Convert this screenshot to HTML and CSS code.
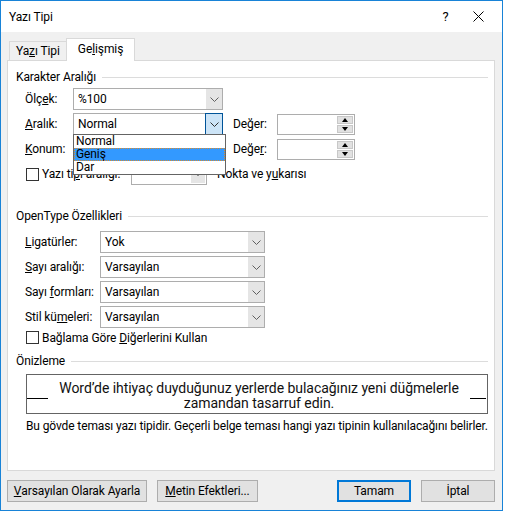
FILE: index.html
```html
<!DOCTYPE html>
<html lang="tr">
<head>
<meta charset="utf-8">
<title>Yazı Tipi</title>
<link rel="stylesheet" href="styles.css">
</head>
<body>
<div class="window">
  <div class="titlebar">
    <span class="title">Yazı Tipi</span>
    <div class="tb-btns">
      <span class="tb-btn tb-help">?</span>
      <span class="tb-btn tb-close"><svg width="11" height="11" viewBox="0 0 11 11"><path d="M0.5 0.5 L10.5 10.5 M10.5 0.5 L0.5 10.5" stroke="#000" stroke-width="1" fill="none"/></svg></span>
    </div>
  </div>
  <div class="body">
    <div class="tabs">
      <div class="tab">Ya<u>z</u>ı Tipi</div>
      <div class="tab active">Ge<u>l</u>işmiş</div>
    </div>
    <div class="panel">
      <div class="group-head"><span>Karakter Aralığı</span><i class="rule"></i></div>
      <div class="rows rows-char">
        <div class="row">
          <span class="lbl lbl-char">Ölç<u>e</u>k:</span>
          <div class="combo combo-char"><span class="val">%100</span><span class="drop"><svg width="9" height="5" viewBox="0 0 9 5"><path d="M0.5 0.5 L4.5 4.5 L8.5 0.5" stroke="#606060" fill="none"/></svg></span></div>
        </div>
        <div class="row">
          <span class="lbl lbl-char"><u>A</u>ralık:</span>
          <div class="combo combo-char focus"><span class="val">Normal</span><span class="drop"><svg width="9" height="5" viewBox="0 0 9 5"><path d="M0.5 0.5 L4.5 4.5 L8.5 0.5" stroke="#303030" fill="none"/></svg></span>
            <div class="listbox">
              <div class="opt">Normal</div>
              <div class="opt sel">Geniş</div>
              <div class="opt">Dar</div>
            </div>
          </div>
          <span class="lbl lbl-val">De<u>ğ</u>er:</span>
          <div class="spin"><span class="spin-field"></span><span class="spin-btns"><span class="sb"><i class="tri-up"></i></span><span class="sb"><i class="tri-dn"></i></span></span></div>
        </div>
        <div class="row">
          <span class="lbl lbl-char"><u>K</u>onum:</span>
          <div class="combo combo-char"><span class="val">Normal</span><span class="drop"><svg width="9" height="5" viewBox="0 0 9 5"><path d="M0.5 0.5 L4.5 4.5 L8.5 0.5" stroke="#606060" fill="none"/></svg></span></div>
          <span class="lbl lbl-val">Değe<u>r</u>:</span>
          <div class="spin"><span class="spin-field"></span><span class="spin-btns"><span class="sb"><i class="tri-up"></i></span><span class="sb"><i class="tri-dn"></i></span></span></div>
        </div>
        <div class="row">
          <span class="chk-wrap"><i class="chk"></i><span>Yazı ti<u>p</u>i aralığı:</span></span>
          <div class="combo combo-size"><span class="val"></span><span class="drop drop-small"><i class="tri-dn"></i></span></div>
          <span class="after">Nokta ve y<u>u</u>karısı</span>
        </div>
      </div>

      <div class="group-head gh-ot"><span>OpenType Özellikleri</span><i class="rule"></i></div>
      <div class="rows rows-ot">
        <div class="row">
          <span class="lbl lbl-ot"><u>L</u>igatürler:</span>
          <div class="combo combo-ot"><span class="val">Yok</span><span class="drop"><svg width="9" height="5" viewBox="0 0 9 5"><path d="M0.5 0.5 L4.5 4.5 L8.5 0.5" stroke="#606060" fill="none"/></svg></span></div>
        </div>
        <div class="row">
          <span class="lbl lbl-ot"><u>S</u>ayı aralığı:</span>
          <div class="combo combo-ot"><span class="val">Varsayılan</span><span class="drop"><svg width="9" height="5" viewBox="0 0 9 5"><path d="M0.5 0.5 L4.5 4.5 L8.5 0.5" stroke="#606060" fill="none"/></svg></span></div>
        </div>
        <div class="row">
          <span class="lbl lbl-ot">Sayı <u>f</u>ormları:</span>
          <div class="combo combo-ot"><span class="val">Varsayılan</span><span class="drop"><svg width="9" height="5" viewBox="0 0 9 5"><path d="M0.5 0.5 L4.5 4.5 L8.5 0.5" stroke="#606060" fill="none"/></svg></span></div>
        </div>
        <div class="row">
          <span class="lbl lbl-ot">Stil kü<u>m</u>eleri:</span>
          <div class="combo combo-ot"><span class="val">Varsayılan</span><span class="drop"><svg width="9" height="5" viewBox="0 0 9 5"><path d="M0.5 0.5 L4.5 4.5 L8.5 0.5" stroke="#606060" fill="none"/></svg></span></div>
        </div>
        <div class="row row-chk">
          <span class="chk-wrap"><i class="chk"></i><span>Bağlama Göre <u>D</u>iğerlerini Kullan</span></span>
        </div>
      </div>

      <div class="group-head gh-prev"><span>Önizleme</span><i class="rule"></i></div>
      <div class="preview">
        <i class="base base-l"></i>
        <div class="preview-text">Word’de ihtiyaç duyduğunuz yerlerde bulacağınız yeni düğmelerle zamandan tasarruf edin.</div>
        <i class="base base-r"></i>
      </div>
      <div class="caption">Bu gövde teması yazı tipidir. Geçerli belge teması hangi yazı tipinin kullanılacağını belirler.</div>
    </div>
    <div class="buttons">
      <span class="btn btn-default"><u>V</u>arsayılan Olarak Ayarla</span>
      <span class="btn btn-effects"><u>M</u>etin Efektleri...</span>
      <span class="spacer"></span>
      <span class="btn btn-ok">Tamam</span>
      <span class="btn btn-cancel">İptal</span>
    </div>
  </div>
</div>
</body>
</html>
```

FILE: styles.css
```css
html, body {
  margin: 0;
  padding: 0;
  background: #ffffff;
}
body {
  font-family: Roboto, "Noto Sans", "DejaVu Sans", sans-serif;
  font-size: 12px;
  letter-spacing: -0.1px;
  color: #000;
  line-height: 16px;
}
u { text-decoration: underline; text-underline-offset: 1px; }

.window {
  width: 503px;
  height: 511px;
  box-sizing: border-box;
  border: 1px solid #1883d7;
  background: #f0f0f0;
  display: flex;
  flex-direction: column;
}

.titlebar {
  flex: none;
  height: 31px;
  background: #fff;
  display: flex;
  align-items: center;
  padding-left: 8px;
}
.title { flex: 1; }
.tb-btns { display: flex; padding-right: 7px; }
.tb-btn {
  width: 34px;
  height: 31px;
  display: flex;
  align-items: center;
  justify-content: center;
}
.tb-help { font-size: 13px; padding-left: 3px; box-sizing: border-box; }

.body {
  flex: 1;
  display: flex;
  flex-direction: column;
  padding: 6px 7px 0 6px;
}

.tabs {
  display: flex;
  align-items: flex-end;
  height: 22px;
  padding-left: 2px;
}
.tab {
  height: 19px;
  box-sizing: border-box;
  border: 1px solid #d9d9d9;
  border-bottom: none;
  border-right: none;
  padding: 0 6px;
  line-height: 18px;
}
.tab.active {
  position: relative;
  z-index: 2;
  height: 23px;
  margin-bottom: -1px;
  background: #fff;
  border-right: 1px solid #d9d9d9;
  padding: 0 11px;
  line-height: 20px;
}

.panel {
  height: 411px;
  box-sizing: border-box;
  border: 1px solid #d9d9d9;
  background: #fff;
  padding: 8px 6px 0 8px;
  display: flex;
  flex-direction: column;
}

.group-head {
  display: flex;
  align-items: center;
  height: 16px;
}
.rule {
  flex: 1;
  border-top: 1px solid #dcdcdc;
  margin-left: 6px;
  margin-top: 1px;
}
.gh-ot { margin-top: 23px; }
.gh-prev { margin-top: 8px; }

.rows {
  display: flex;
  flex-direction: column;
  gap: 3px;
  padding-left: 9px;
}
.rows-char { margin-top: 3px; }
.rows-ot { margin-top: 7px; }

.row {
  display: flex;
  align-items: center;
  height: 22px;
}
.row-chk { height: 15px; margin-top: -1px; }

.lbl { flex: none; }
.lbl-char { width: 48px; }
.lbl-ot { width: 75px; }
.lbl-val { width: 44px; margin-left: 10px; }

.combo {
  position: relative;
  flex: none;
  height: 22px;
  box-sizing: border-box;
  border: 1px solid #adadad;
  background: #fff;
  display: flex;
  align-items: stretch;
}
.combo-char { width: 150px; }
.combo-ot { width: 165px; }
.combo-size { width: 76px; }
.val {
  flex: 1;
  padding-left: 4px;
  line-height: 20px;
}
.drop {
  width: 16px;
  background: #e5e5e5;
  display: flex;
  align-items: center;
  justify-content: center;
}
.combo.focus .drop {
  background: #cce4f7;
  border: 1px solid #005499;
  margin: -1px -1px -1px 0;
}
.drop-small { width: 14px; margin: 1px; }

.listbox {
  position: absolute;
  z-index: 10;
  left: -1px;
  top: 20px;
  width: 153px;
  box-sizing: border-box;
  border: 1px solid #646464;
  background: #fff;
  padding: 0;
}
.opt {
  height: 13px;
  line-height: 13px;
  padding-left: 2px;
  box-sizing: border-box;
}
.opt.sel {
  background: #3399ff;
  outline: 1px dotted #d98a2c;
  outline-offset: -1px;
}

.spin {
  flex: none;
  width: 78px;
  height: 21px;
  box-sizing: border-box;
  border: 1px solid #adadad;
  background: #fff;
  display: flex;
}
.spin-field { flex: 1; }
.spin-btns {
  width: 16px;
  display: flex;
  flex-direction: column;
  padding: 1px 1px 1px 0;
  gap: 1px;
}
.sb {
  flex: 1;
  background: #e1e1e1;
  border: 1px solid #c8c8c8;
  display: flex;
  align-items: center;
  justify-content: center;
}
.tri-up, .tri-dn {
  width: 0;
  height: 0;
  border-left: 3.5px solid transparent;
  border-right: 3.5px solid transparent;
}
.tri-up { border-bottom: 4px solid #000; }
.tri-dn { border-top: 4px solid #000; }

.chk-wrap {
  display: flex;
  align-items: center;
  gap: 3px;
  width: 106px;
  white-space: nowrap;
}
.row-chk .chk-wrap { width: auto; }
.chk {
  display: block;
  width: 13px;
  height: 13px;
  box-sizing: border-box;
  border: 1px solid #333;
  background: #fff;
  margin-left: 1px;
}
.after { margin-left: 10px; }

.preview {
  margin-top: 5px;
  margin-left: 10px;
  width: 462px;
  height: 40px;
  box-sizing: border-box;
  border: 1px solid #646464;
  display: flex;
  align-items: flex-start;
}
.base {
  flex: none;
  height: 0;
  border-top: 1px solid #000;
  margin-top: 23px;
}
.base-l { width: 21px; }
.base-r { width: 16px; margin-right: 1px; }
.preview-text {
  flex: 1;
  text-align: center;
  font-size: 14px;
  letter-spacing: -0.05px;
  line-height: 15px;
  padding-top: 6px;
  color: #111;
}

.caption {
  margin-top: 4px;
  padding-left: 10px;
  white-space: nowrap;
  letter-spacing: -0.12px;
}

.buttons {
  display: flex;
  margin-top: 9px;
  height: 22px;
}
.btn {
  height: 22px;
  box-sizing: border-box;
  border: 1px solid #adadad;
  background: #e1e1e1;
  display: flex;
  align-items: center;
  justify-content: center;
}
.btn-default { width: 140px; }
.btn-effects { width: 101px; margin-left: 10px; }
.spacer { flex: 1; }
.btn-ok { width: 74px; border: 2px solid #0078d7; }
.btn-cancel { width: 74px; margin-left: 10px; }
```
